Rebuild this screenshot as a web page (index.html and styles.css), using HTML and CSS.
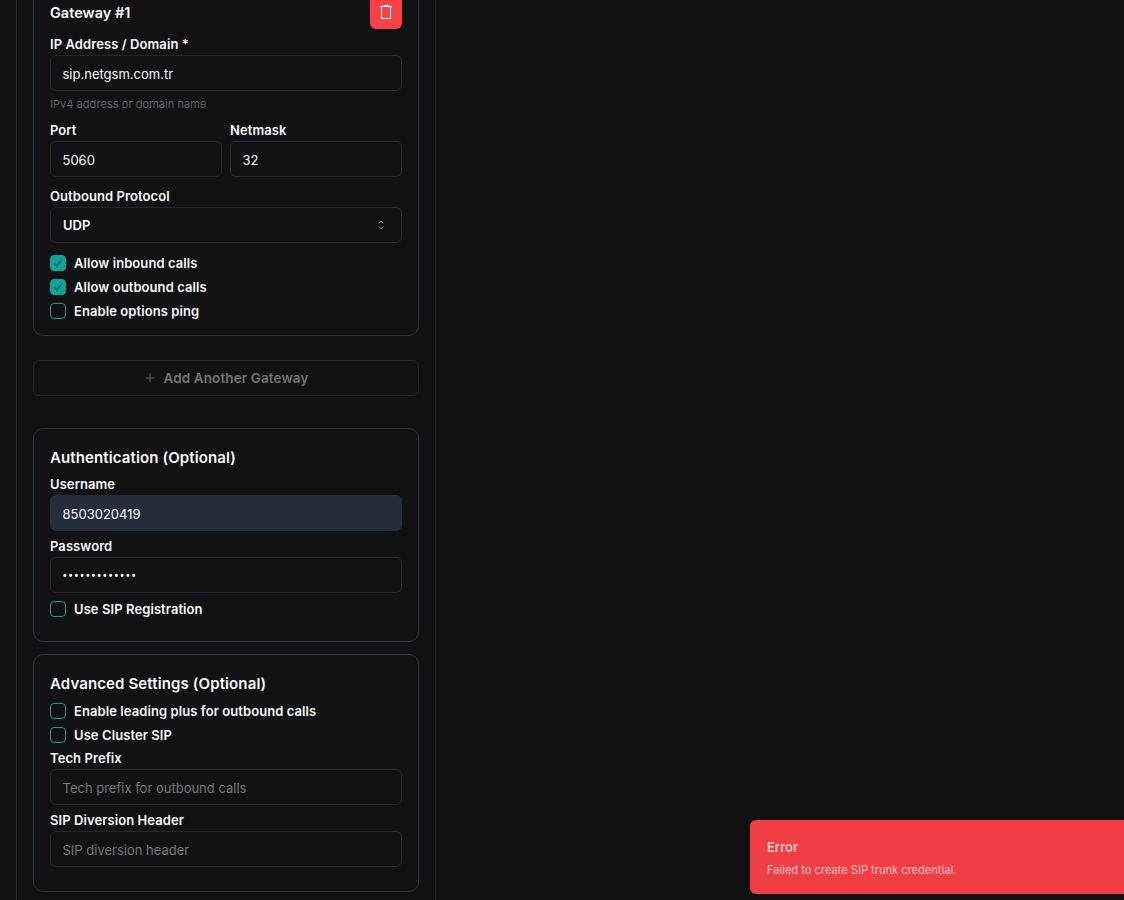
FILE: index.html
```html
<!DOCTYPE html>
<html lang="en">
<head>
<meta charset="utf-8">
<title>SIP Trunk</title>
<link rel="stylesheet" href="styles.css">
</head>
<body>
<div class="page">
  <div class="panel">
    <section class="card gateway">
      <div class="card-head">
        <h3 class="title title-sm">Gateway #1</h3>
        <button class="delete" aria-label="Delete">
          <svg width="16" height="16" viewBox="0 0 16 16" fill="none" stroke="#fff" stroke-width="1.1"><path d="M2 3.5h12"/><path d="M6 3V2.5h4V3"/><path d="M3.5 4v11.5h9V4"/></svg>
        </button>
      </div>
      <div class="field">
        <label class="label">IP Address / Domain *</label>
        <input class="input" value="sip.netgsm.com.tr">
        <p class="hint">IPv4 address or domain name</p>
      </div>
      <div class="two">
        <div><label class="label">Port</label><input class="input" value="5060"></div>
        <div><label class="label">Netmask</label><input class="input" value="32"></div>
      </div>
      <div class="field protocol">
        <label class="label">Outbound Protocol</label>
        <div class="select"><span>UDP</span>
          <svg width="12" height="12" viewBox="0 0 12 12" fill="none" stroke="#9aa0a8" stroke-width="1"><path d="M3.8 4.4 6 2.2l2.2 2.2"/><path d="M3.8 7.6 6 9.8l2.2-2.2"/></svg>
        </div>
      </div>
      <div class="checks">
        <div class="check"><span class="box on"><svg width="12" height="12" viewBox="0 0 12 12" fill="none" stroke="#0b3b38" stroke-width="1.1"><path d="M2.5 6.5 5 9l4.5-6"/></svg></span>Allow inbound calls</div>
        <div class="check"><span class="box on"><svg width="12" height="12" viewBox="0 0 12 12" fill="none" stroke="#0b3b38" stroke-width="1.1"><path d="M2.5 6.5 5 9l4.5-6"/></svg></span>Allow outbound calls</div>
        <div class="check"><span class="box"></span>Enable options ping</div>
      </div>
    </section>

    <button class="add">
      <svg width="12" height="12" viewBox="0 0 12 12" fill="none" stroke="#5f6063" stroke-width="1"><path d="M6 1.5v9M1.5 6h9"/></svg>
      Add Another Gateway
    </button>

    <section class="card auth">
      <h3 class="title">Authentication (Optional)</h3>
      <div class="stack">
        <div><label class="label">Username</label><input class="input filled" value="8503020419"></div>
        <div><label class="label">Password</label><input class="input secret" type="password" value="1234567890123"></div>
      </div>
      <div class="check single"><span class="box"></span>Use SIP Registration</div>
    </section>

    <section class="card advanced">
      <h3 class="title">Advanced Settings (Optional)</h3>
      <div class="checks tight">
        <div class="check"><span class="box"></span>Enable leading plus for outbound calls</div>
        <div class="check"><span class="box"></span>Use Cluster SIP</div>
      </div>
      <div class="stack">
        <div><label class="label">Tech Prefix</label><input class="input" placeholder="Tech prefix for outbound calls"></div>
        <div><label class="label">SIP Diversion Header</label><input class="input" placeholder="SIP diversion header"></div>
      </div>
    </section>
  </div>
</div>
<div class="toast">
  <div class="toast-title">Error</div>
  <div class="toast-text">Failed to create SIP trunk credential.</div>
</div>
</body>
</html>
```
FILE: styles.css
```css
* { box-sizing: border-box; }
html, body { margin: 0; height: 100%; }
body {
  background: #111113;
  color: #fafafa;
  font-family: Inter, "Liberation Sans", sans-serif;
  overflow: hidden;
  position: relative;
}
.page { width: 452px; padding: 0 16px; margin-top: -40px; }
.panel {
  border-left: 1px solid #24272d;
  border-right: 1px solid #24272d;
  padding: 16px 16px 40px;
  display: flex;
  flex-direction: column;
}
.card {
  border: 1px solid #2b3440;
  border-radius: 10px;
  padding: 16px;
}
.card-head {
  display: flex;
  justify-content: space-between;
  align-items: center;
  height: 36px;
  margin-bottom: 5px;
}
.gateway { padding-bottom: 16px; }
.title { margin: 0 0 -1px; padding-top: 1px; font-size: 15px; line-height: 24px; font-weight: 600; letter-spacing: 0.12px; }
.title-sm { margin: 0; padding-top: 4px; font-size: 14.5px; letter-spacing: 0; }
.delete {
  width: 32px;
  height: 36px;
  border: 0;
  padding: 0;
  border-radius: 6px;
  background: #fb4048;
  display: flex;
  align-items: center;
  justify-content: center;
}
.label { display: block; font-size: 13px; line-height: 21px; font-weight: 600; letter-spacing: 0.08px; color: #fafafa; }
.input {
  display: block;
  width: 100%;
  height: 36px;
  background: transparent;
  border: 1px solid #24272d;
  border-radius: 6px;
  padding: 1px 12px 0 11.5px;
  font: 400 13px Inter, "Liberation Sans", sans-serif;
  color: #fafafa;
  outline: 0;
}
.input::placeholder { color: #71757c; opacity: 1; }
.input.filled { background: #252d3a; border-color: #252d3a; }
.input.secret { font-family: Roboto, sans-serif; font-size: 14px; letter-spacing: 1px; }
.hint { margin: 5px 0 0; font-size: 11px; line-height: 16px; letter-spacing: 0.05px; color: #5b616b; }
.two { display: grid; grid-template-columns: 172px 172px; gap: 8px; margin-top: 8px; }
.protocol { margin-top: 9px; }
.select {
  height: 36px;
  border: 1px solid #24272d;
  border-radius: 6px;
  padding: 0 14px 0 12px;
  display: flex;
  align-items: center;
  justify-content: space-between;
  font-size: 13px;
  font-weight: 600;
}
.checks { display: flex; flex-direction: column; gap: 8px; margin-top: 12px; }
.checks.tight { margin-top: 8px; }
.check { display: flex; align-items: center; gap: 8px; font-size: 13px; line-height: 16px; font-weight: 600; letter-spacing: 0.08px; }
.check.single { margin-top: 8px; }
.box {
  width: 16px;
  height: 16px;
  border: 1px solid #0f9c8f;
  border-radius: 4px;
  display: flex;
  align-items: center;
  justify-content: center;
  flex: none;
}
.box.on { background: #0da597; border-color: #0da597; }
.add {
  margin-top: 24px;
  height: 36px;
  width: 100%;
  background: transparent;
  border: 1px solid #212328;
  border-radius: 6px;
  color: #717275;
  font: 600 13.5px Inter, "Liberation Sans", sans-serif;
  letter-spacing: 0.1px;
  display: flex;
  align-items: center;
  justify-content: center;
  gap: 8px;
  padding: 0;
}
.auth { margin-top: 32px; padding-bottom: 24px; }
.advanced { margin-top: 12px; padding-bottom: 24px; }
.stack { display: flex; flex-direction: column; gap: 5px; margin-top: 5px; }
.toast {
  position: absolute;
  left: 750px;
  top: 820px;
  width: 420px;
  height: 74px;
  background: #f13d44;
  border-radius: 6px;
  padding: 17px 17px 0;
}
.toast-title { font-size: 13px; line-height: 21px; font-weight: 600; color: #fdc4c6; }
.toast-text { font-size: 11.1px; line-height: 16px; margin-top: 4px; color: #fdc4c6; }
```
